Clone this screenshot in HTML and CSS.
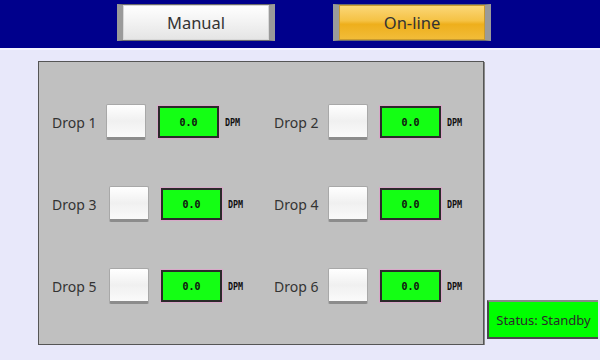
FILE: index.html
```html
<!DOCTYPE html>
<html lang="en">
<head>
<meta charset="UTF-8">
<title>Drop Control</title>
<link rel="stylesheet" href="styles.css">
</head>
<body>
<div class="topbar">
    <button class="mode-btn">Manual</button>
    <button class="mode-btn active">On-line</button>
</div>
<div class="main">
    <div class="panel">
        <div class="drop">
            <span class="drop-label">Drop 1</span>
            <button class="drop-btn"></button>
            <div class="rate">0.0</div>
            <span class="unit">DPM</span>
        </div>
        <div class="drop">
            <span class="drop-label">Drop 2</span>
            <button class="drop-btn"></button>
            <div class="rate">0.0</div>
            <span class="unit">DPM</span>
        </div>
        <div class="drop shifted">
            <span class="drop-label">Drop 3</span>
            <button class="drop-btn"></button>
            <div class="rate">0.0</div>
            <span class="unit">DPM</span>
        </div>
        <div class="drop">
            <span class="drop-label">Drop 4</span>
            <button class="drop-btn"></button>
            <div class="rate">0.0</div>
            <span class="unit">DPM</span>
        </div>
        <div class="drop shifted">
            <span class="drop-label">Drop 5</span>
            <button class="drop-btn"></button>
            <div class="rate">0.0</div>
            <span class="unit">DPM</span>
        </div>
        <div class="drop">
            <span class="drop-label">Drop 6</span>
            <button class="drop-btn"></button>
            <div class="rate">0.0</div>
            <span class="unit">DPM</span>
        </div>
    </div>
    <div class="status">Status: Standby</div>
</div>
</body>
</html>
```

FILE: styles.css
```css
body {
    margin: 0;
    background-color: #e8e8fa;
    font-family: "Noto Sans", "Open Sans", sans-serif;
    color: #333333;
}
.topbar {
    height: 48px;
    background-color: #00008c;
    border-bottom: 2px solid #f4f4ff;
    display: flex;
    align-items: flex-start;
    padding-left: 117px;
    gap: 58px;
}
.mode-btn {
    margin-top: 4px;
    width: 158px;
    height: 37px;
    font-family: "Noto Sans", sans-serif;
    font-size: 16.5px;
    color: #333333;
    border: 1px solid #6c6c6c;
    border-left: 6px solid #9a9a9a;
    border-right: 6px solid #9a9a9a;
    background: linear-gradient(#ffffff, #f2f2f2 50%, #e4e4e4);
    box-shadow: inset 0 0 0 1px #d8d8d8;
    padding: 0;
}
.mode-btn.active {
    background: linear-gradient(#fbd87a, #f5c244 45%, #eeaf1c 55%, #f2bd3a);
    box-shadow: inset 0 0 0 1px #c89a30;
}
.main {
    display: flex;
    align-items: flex-end;
    padding: 11px 0 0 38px;
    gap: 3px;
}
.panel {
    width: 419px;
    height: 240px;
    background-color: #c0c0c0;
    border: 1px solid #555555;
    box-shadow: 1px 1px 0 #8a8a8a;
    padding: 42px 12px 0 13px;
    display: grid;
    grid-template-columns: 222px 1fr;
    grid-auto-rows: 36px;
    row-gap: 46px;
}
.drop {
    display: flex;
    align-items: center;
}
.drop.shifted .drop-label {
    width: 57px;
}
.drop-label {
    width: 54px;
    font-size: 14px;
}
.drop-btn {
    width: 40px;
    height: 36px;
    padding: 0;
    border: 1px solid #a8a8a8;
    border-bottom: 3px solid #8c8c8c;
    border-radius: 2px;
    background: linear-gradient(#ffffff, #f0f0f0 50%, #fafafa);
}
.rate {
    margin-left: 12px;
    width: 57px;
    height: 28px;
    background-color: #14ff14;
    border: 2px solid #2a2a2a;
    box-shadow: 0 0 0 1px #d8a8c8;
    font-family: "DejaVu Sans Mono", monospace;
    font-weight: bold;
    font-size: 10px;
    color: #111111;
    display: flex;
    align-items: center;
    justify-content: center;
}
.unit {
    margin-left: 6px;
    font-family: "DejaVu Sans Mono", monospace;
    font-weight: bold;
    font-size: 10.5px;
    color: #111111;
    transform: scaleX(0.8);
    transform-origin: left;
}
.status {
    margin-bottom: 6px;
    width: 109px;
    height: 35px;
    background-color: #00ff00;
    border: 2px solid #4a4a4a;
    border-top-color: #888888;
    border-right: none;
    font-size: 13px;
    color: #2a2a2a;
    display: flex;
    align-items: center;
    justify-content: center;
}
```
